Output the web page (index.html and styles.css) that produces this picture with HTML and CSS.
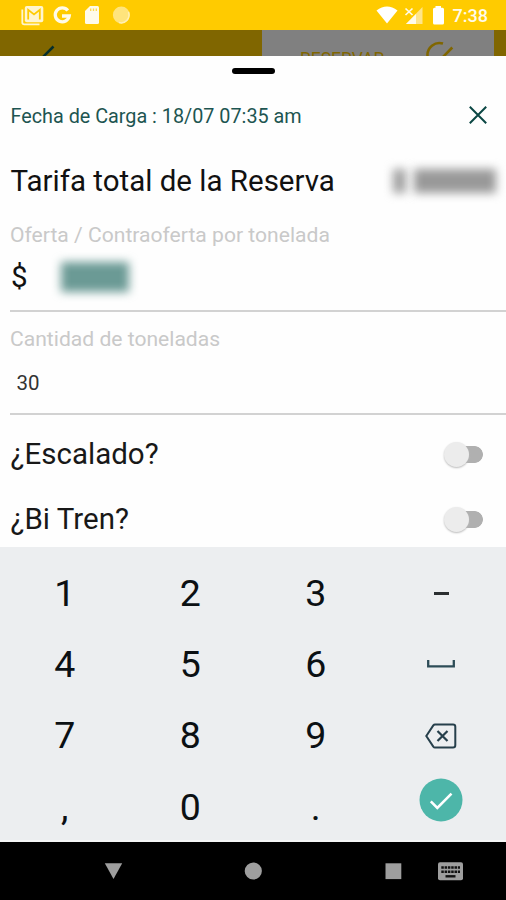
FILE: index.html
```
<!DOCTYPE html>
<html lang="es">
<head>
<meta charset="utf-8">
<title>Reserva</title>
<link rel="stylesheet" href="styles.css">
</head>
<body>
<div class="screen">
  <div class="status">
    <svg class="notifications" viewBox="0 0 135 30">
      <path d="M22.3 9.5V22.5Q22.3 24.3 24.3 24.3H39.5" fill="none" stroke="#fff5cf" stroke-width="1.8"/>
      <rect x="24.8" y="6" width="18.5" height="16.3" rx="2" fill="#fff5cf"/>
      <path d="M28.2 19.4V9.8L34 14.4L39.8 9.8V19.4" fill="none" stroke="#ffcb00" stroke-width="1.8"/>
      <path d="M67.800 10.500A7 7 0 1 0 69.2 16H62" fill="none" stroke="#fffbea" stroke-width="3.3"/>
      <path d="M90 6H97.5Q99 6 99 7.5V22.5Q99 24 97.5 24H86.500Q85 24 85 22.500V11Z" fill="#fffbea"/>
      <path d="M90.700 8.500V11M93.500 8.500V11M96.300 8.500V11" stroke="#ffd94d" stroke-width="1.300"/>
      <circle cx="121.300" cy="15" r="8.400" fill="#ffe47c"/>
      <path d="M119 22.600A8 8 0 0 0 128.500 12" fill="none" stroke="#fff0b5" stroke-width="1.500"/>
    </svg>
    <div class="system">
      <svg class="signals" viewBox="0 0 72 30">
        <path d="M0.500 10.500Q11 2.500 21.500 10.500L11 23.500Z" fill="#fff"/>
        <path d="M46.500 7V24H30Z" fill="#ffe58a"/>
        <path d="M40 14V24H30Z" fill="#fffbea"/>
        <path d="M29.500 8.500L36.500 15M36.500 8.500L29.500 15" stroke="#fffbea" stroke-width="1.700"/>
        <path d="M59.500 7.800V6H65V7.800H66.500Q68 7.800 68 9.300V23Q68 24.500 66.500 24.500H58.500Q57 24.500 57 23V9.300Q57 7.800 58.500 7.800Z" fill="#fff"/>
      </svg>
      <span class="clock">7:38</span>
    </div>
  </div>
  <div class="appbar">
    <svg class="back" viewBox="0 0 60 26"><path d="M53.500 16.500L43 27" stroke="#062f2c" stroke-width="2.500"/></svg>
    <div class="reserve">
      <span class="reserve-label">RESERVAR</span>
      <svg class="reserve-icon" viewBox="0 0 32 26"><path d="M18 13.600A12 12 0 0 0 2.500 26M27.300 17.500L18 27" fill="none" stroke="#806600" stroke-width="2.600"/></svg>
    </div>
  </div>
  <main class="sheet">
    <div class="handle"></div>
    <div class="row date-row">
      <span class="date">Fecha de Carga : 18/07 07:35 am</span>
      <svg class="close" viewBox="0 0 18 18"><path d="M.8 .8L17.200 17.200M17.200 .8L.8 17.200" stroke="#0b4744" stroke-width="2"/></svg>
    </div>
    <div class="row total-row">
      <span class="total">Tarifa total de la Reserva</span>
      <span class="masked"><i class="mask-sign"></i><i class="mask-amount"></i></span>
    </div>
    <section class="field offer">
      <label class="label">Oferta / Contraoferta por tonelada</label>
      <div class="money"><span class="dollar">$</span><i class="mask-offer"></i></div>
    </section>
    <section class="field amount">
      <label class="label">Cantidad de toneladas</label>
      <div class="value">30</div>
    </section>
    <div class="row option"><span>¿Escalado?</span><span class="switch"><i></i></span></div>
    <div class="row option"><span>¿Bi Tren?</span><span class="switch"><i></i></span></div>
  </main>
  <div class="keyboard">
    <span class="digit">1</span><span class="digit">2</span><span class="digit">3</span><span><i class="dash"></i></span>
    <span class="digit">4</span><span class="digit">5</span><span class="digit">6</span>
    <span><svg class="space" viewBox="0 0 28 8"><path d="M1.200 0V6.400H26.800V0" fill="none" stroke="#2d4c57" stroke-width="2.300"/></svg></span>
    <span class="digit">7</span><span class="digit">8</span><span class="digit">9</span>
    <span><svg class="delete" viewBox="0 0 32 26"><path d="M10 1.500H28Q30.300 1.500 30.300 3.800V22.200Q30.300 24.500 28 24.500H10Q9 24.500 8.300 23.600L1.300 13L8.300 2.400Q9 1.500 10 1.500Z" fill="none" stroke="#263f4b" stroke-width="2"/><path d="M12.500 8L22.500 18M22.500 8L12.500 18" stroke="#263f4b" stroke-width="2.200"/></svg></span>
    <span class="digit">,</span><span class="digit">0</span><span class="digit">.</span>
    <span><svg class="done" viewBox="0 0 44 44"><circle cx="22" cy="22" r="21.500" fill="#4db6a9"/><path d="M11.800 23.300L18.300 29.800L32.500 15.600" fill="none" stroke="#fff" stroke-width="2.600"/></svg></span>
  </div>
  <nav class="nav">
    <svg viewBox="0 0 506 58">
      <g fill="#9e9e9e">
        <path d="M104.800 21.300H122.200L113.500 37Z"/>
        <circle cx="253.300" cy="29" r="8.600"/>
        <rect x="385.500" y="21.300" width="15.800" height="15.800"/>
        <rect x="438" y="20.300" width="25" height="18" rx="2"/>
      </g>
      <path d="M441.300 25.500H460M441.300 29.700H460" stroke="#111" stroke-width="2.400" stroke-dasharray="2.500 .8"/>
      <path d="M445.500 34.300H455.500" stroke="#111" stroke-width="2.400"/>
    </svg>
  </nav>
</div>
</body>
</html>
```

FILE: styles.css
```
* { box-sizing: border-box; }
body { margin: 0; font-family: Roboto, "Liberation Sans", sans-serif; }
svg { display: block; flex: none; }
.screen { width: 506px; height: 900px; display: flex; flex-direction: column; overflow: hidden; background: #fff; }
.status { height: 30px; background: #ffcb00; display: flex; justify-content: space-between; }
.notifications { width: 135px; height: 30px; }
.system { display: flex; width: 130px; }
.signals { width: 72px; height: 30px; }
.clock { margin-left: 4.5px; font-size: 18px; font-weight: 500; line-height: 32px; color: #fffbea; }
.appbar { height: 26px; background: #806600; display: flex; justify-content: space-between; padding-right: 12px; overflow: hidden; }
.back { width: 60px; height: 26px; }
.reserve { width: 232px; background: #808080; display: flex; padding-left: 38px; overflow: hidden; }
.reserve-label { width: 125px; font-size: 17.5px; line-height: 20px; padding-top: 19px; color: #806600; white-space: nowrap; }
.reserve-icon { width: 32px; height: 26px; }
.sheet { height: 491px; background: #fefefe; display: flex; flex-direction: column; }
.sheet > * { flex: none; }
.handle { width: 43px; height: 6px; margin: 12px 0 0 232px; border-radius: 3px; background: #000; }
.row { display: flex; justify-content: space-between; align-items: center; padding-left: 10.5px; white-space: nowrap; }
.date-row { height: 40px; margin-top: 22px; padding-right: 19px; }
.date { font-size: 19.8px; color: #1d5551; }
.close { width: 18px; height: 18px; margin-bottom: 2px; }
.total-row { height: 60px; margin-top: 15px; padding-right: 10px; color: #111; }
.total { font-size: 29.5px; }
.masked { display: flex; gap: 8px; }
.mask-sign { width: 13px; height: 24px; background: #a0a0a0; filter: blur(5px); }
.mask-amount { width: 82px; height: 24px; background: #999; filter: blur(5px); }
.field { margin-left: 10px; border-bottom: 2px solid #d2d2d2; white-space: nowrap; }
.offer { height: 101px; padding-top: 10px; }
.amount { height: 103px; padding-top: 13px; margin-bottom: 11px; }
.label { display: block; height: 28px; line-height: 28px; font-size: 21.1px; color: #c9c9c9; }
.money { display: flex; height: 56px; align-items: center; color: #111; }
.dollar { width: 51px; padding-left: 1px; font-size: 29.5px; }
.mask-offer { width: 68px; height: 30px; background: #6b9a95; filter: blur(5px); }
.value { padding-left: 6.5px; font-size: 20.5px; line-height: 32px; margin-top: 14px; color: #333; }
.option { height: 56px; margin-bottom: 9px; font-size: 29.5px; color: #181818; padding-right: 23px; }
.option:last-child { margin-bottom: 0; }
.switch { width: 39px; height: 26px; display: flex; align-items: center; background: linear-gradient(#b0b0b0, #b0b0b0) 13px 5px / 18px 17px no-repeat, radial-gradient(circle at 30.5px 13.5px, #b0b0b0 8px, transparent 8.7px); }
.switch i { width: 25px; height: 25px; border-radius: 50%; background: #ececec; box-shadow: 0 1px 2px #bbb; }
.keyboard { height: 295px; background: #eceef0; padding: 11px 2px 0; display: grid; grid-template-columns: repeat(4, 125.5px); grid-template-rows: repeat(4, 71.3px); color: #0b1013; font-size: 37.5px; border-bottom: 2px solid #f5f6f6; overflow: hidden; }
.keyboard span { display: flex; justify-content: center; align-items: center; }
.keyboard .digit { padding-bottom: 2px; }
.dash { width: 15px; height: 3px; background: #2b2f31; }
.space { width: 28px; height: 8px; margin-bottom: 2px; }
.delete { width: 32px; height: 26px; margin-bottom: 1px; }
.done { width: 44px; height: 44px; margin-bottom: 16px; }
.nav { height: 58px; background: #000; }
.nav svg { width: 506px; height: 58px; }
```
